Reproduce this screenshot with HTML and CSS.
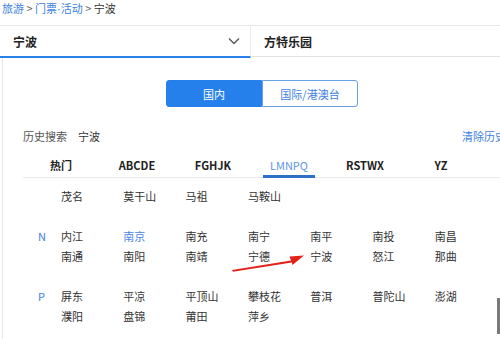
FILE: index.html
```html
<!DOCTYPE html>
<html lang="zh-CN">
<head>
    <meta charset="UTF-8">
    <meta name="viewport" content="width=device-width, initial-scale=1.0">
    <title>门票·活动 - 宁波</title>
    <link rel="stylesheet" href="styles.css">
</head>
<body>
    <!-- Breadcrumb -->
    <div class="crumb">
        <a href="#">旅游</a> &gt; <a href="#">门票<span class="dot">·</span>活动</a> &gt; <span class="here">宁波</span>
    </div>

    <!-- Search bar -->
    <div class="search">
        <div class="field city">
            <span>宁波</span>
            <svg class="chevron" width="12" height="8" viewBox="0 0 12 8">
                <path d="M1 1.5 L6 6.5 L11 1.5" fill="none" stroke="#555" stroke-width="1.3"/>
            </svg>
        </div>
        <div class="field keyword">方特乐园</div>
    </div>

    <!-- City picker -->
    <div class="panel">
        <div class="toggle">
            <button class="seg active">国内</button>
            <button class="seg">国际/港澳台</button>
        </div>

        <div class="history">
            <div><span class="muted">历史搜索</span><span class="recent">宁波</span></div>
            <a href="#" class="clear">清除历史</a>
        </div>

        <div class="tabs">
            <div class="tab">热门</div>
            <div class="tab">ABCDE</div>
            <div class="tab">FGHJK</div>
            <div class="tab active">LMNPQ</div>
            <div class="tab">RSTWX</div>
            <div class="tab">YZ</div>
        </div>

        <div class="groups">
            <div class="group">
                <div class="row"><span class="letter"></span><span>茂名</span><span>莫干山</span><span>马祖</span><span>马鞍山</span></div>
            </div>
            <div class="group">
                <div class="row"><span class="letter">N</span><span>内江</span><span class="hot">南京</span><span>南充</span><span>南宁</span><span>南平</span><span>南投</span><span>南昌</span></div>
                <div class="row"><span class="letter"></span><span>南通</span><span>南阳</span><span>南靖</span><span>宁德</span><span>宁波</span><span>怒江</span><span>那曲</span></div>
            </div>
            <div class="group">
                <div class="row"><span class="letter">P</span><span>屏东</span><span>平凉</span><span>平顶山</span><span>攀枝花</span><span>普洱</span><span>普陀山</span><span>澎湖</span></div>
                <div class="row"><span class="letter"></span><span>濮阳</span><span>盘锦</span><span>莆田</span><span>萍乡</span></div>
            </div>
        </div>
    </div>

    <!-- annotation arrow -->
    <svg class="arrow" width="80" height="22" viewBox="0 0 80 22">
        <path d="M1 19 L60 9.5 L58.5 5.5 L73 4.5 L61.5 14 L60.8 11.5 L2 20.8 Z" fill="#e3231b"/>
    </svg>

    <div class="scroll"></div>
</body>
</html>
```

FILE: styles.css
```css
/* page */
body {
    margin: 0;
    width: 500px;
    height: 339px;
    overflow: hidden;
    position: relative;
    background: #ffffff;
    color: #333333;
    font-family: "Noto Sans CJK SC", "Noto Sans", sans-serif;
    font-size: 11px;
}

a {
    color: #3d7fe0;
    text-decoration: none;
}

/* Breadcrumb */
.crumb {
    height: 16px;
    line-height: 16px;
    padding: 0 2px;
    color: #666666;
}

.crumb .dot {
    font-family: "Liberation Sans", sans-serif;
}

.crumb .here {
    color: #333333;
}

/* Search bar */
.search {
    display: flex;
    margin-top: 9px;
    height: 32px;
    border-top: 1px solid #e6e6e6;
}

.field {
    display: flex;
    align-items: center;
    padding-left: 13px;
    font-size: 12px;
    font-weight: bold;
    color: #222222;
}

.city {
    width: 229px;
    padding-right: 8px;
    justify-content: space-between;
    border-bottom: 2px solid #2a7fe8;
    border-right: 1px solid #ececec;
}

.chevron {
    margin-right: 2px;
}

.keyword {
    flex: 1;
    border-bottom: 1px solid #e2e2e2;
    margin-bottom: 1px;
}

/* City picker panel */
.panel {
    margin-left: 2px;
    border-left: 1px solid #e6e6e6;
    padding-top: 22px;
    height: 260px;
}

.toggle {
    display: flex;
    padding-left: 163px;
}

.seg {
    width: 96px;
    height: 27px;
    font-family: inherit;
    font-size: 11px;
    color: #3d7fe0;
    background: #ffffff;
    border: 1px solid #6a9ee6;
    border-radius: 0 3px 3px 0;
}

.seg.active {
    background: #2680eb;
    border-color: #2680eb;
    color: #ffffff;
    border-radius: 3px 0 0 3px;
}

.history {
    display: flex;
    justify-content: space-between;
    margin-top: 21px;
    padding-left: 20px;
    line-height: 16px;
    white-space: nowrap;
}

.muted {
    color: #555555;
}

.recent {
    margin-left: 11px;
}

.clear {
    margin-right: -6px;
}

.tabs {
    display: flex;
    margin: 11px 0 0 20px;
    border-bottom: 1px solid #ebebeb;
}

.tab {
    width: 76px;
    padding: 2px 0 1px;
    line-height: 16px;
    text-align: center;
    font-weight: bold;
    color: #222222;
    border-bottom: 3px solid transparent;
}

.tab.active {
    color: #5d95e4;
    font-weight: normal;
    border-bottom-color: #2c6fc6;
    margin: 0 12px -1px;
    padding-bottom: 2px;
    width: 52px;
}

/* city rows */
.groups {
    padding-top: 8px;
}

.group {
    margin-bottom: 20px;
}

.row {
    display: flex;
    height: 20px;
    line-height: 20px;
}

.row span {
    width: 62.3px;
    flex-shrink: 0;
}

.row .letter {
    width: 23px;
    padding-left: 35px;
    color: #3d7fe0;
}

.row .hot {
    color: #4a86de;
}

/* overlays */
.arrow {
    position: absolute;
    left: 231px;
    top: 251px;
}

.scroll {
    position: absolute;
    right: 0;
    top: 298px;
    width: 3px;
    height: 36px;
    background: #7a7a7a;
}
```
